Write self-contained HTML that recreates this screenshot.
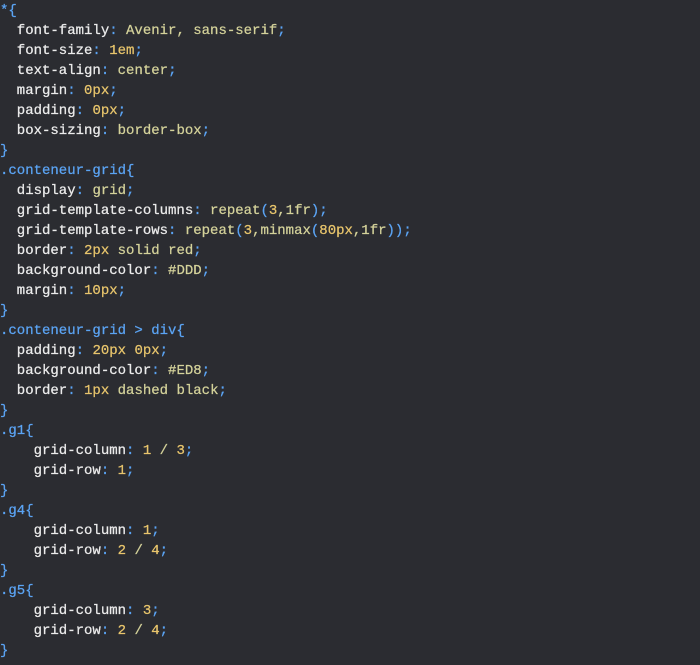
<!DOCTYPE html>
<html><head><meta charset="utf-8"><style>
html,body{margin:0;padding:0;background:#2b2c31;width:700px;height:665px;overflow:hidden}
pre{margin:0;padding:1px 0 0 0;font-family:"Liberation Mono",monospace;font-size:14px;line-height:20px;color:#ececec;white-space:pre;-webkit-text-stroke:0.25px}
.b{color:#5ba4f4}.k{color:#d4d29a}.n{color:#e8c56c}
</style></head><body><pre><span class="b">*{</span>
  font-family<span class="b">:</span> <span class="k">Avenir, sans-serif</span><span class="b">;</span>
  font-size<span class="b">:</span> <span class="n">1em</span><span class="b">;</span>
  text-align<span class="b">:</span> <span class="k">center</span><span class="b">;</span>
  margin<span class="b">:</span> <span class="n">0px</span><span class="b">;</span>
  padding<span class="b">:</span> <span class="n">0px</span><span class="b">;</span>
  box-sizing<span class="b">:</span> <span class="k">border-box</span><span class="b">;</span>
<span class="b">}</span>
<span class="b">.conteneur-grid{</span>
  display<span class="b">:</span> <span class="k">grid</span><span class="b">;</span>
  grid-template-columns<span class="b">:</span> <span class="k">repeat</span><span class="b">(</span><span class="n">3</span><span class="k">,1fr</span><span class="b">);</span>
  grid-template-rows<span class="b">:</span> <span class="k">repeat</span><span class="b">(</span><span class="n">3</span><span class="k">,minmax</span><span class="b">(</span><span class="n">80px</span><span class="k">,1fr</span><span class="b">));</span>
  border<span class="b">:</span> <span class="n">2px</span> <span class="k">solid red</span><span class="b">;</span>
  background-color<span class="b">:</span> <span class="k">#DDD</span><span class="b">;</span>
  margin<span class="b">:</span> <span class="n">10px</span><span class="b">;</span>
<span class="b">}</span>
<span class="b">.conteneur-grid &gt; div{</span>
  padding<span class="b">:</span> <span class="n">20px 0px</span><span class="b">;</span>
  background-color<span class="b">:</span> <span class="k">#ED8</span><span class="b">;</span>
  border<span class="b">:</span> <span class="n">1px</span> <span class="k">dashed black</span><span class="b">;</span>
<span class="b">}</span>
<span class="b">.g1{</span>
    grid-column<span class="b">:</span> <span class="n">1</span> <span class="k">/</span> <span class="n">3</span><span class="b">;</span>
    grid-row<span class="b">:</span> <span class="n">1</span><span class="b">;</span>
<span class="b">}</span>
<span class="b">.g4{</span>
    grid-column<span class="b">:</span> <span class="n">1</span><span class="b">;</span>
    grid-row<span class="b">:</span> <span class="n">2</span> <span class="k">/</span> <span class="n">4</span><span class="b">;</span>
<span class="b">}</span>
<span class="b">.g5{</span>
    grid-column<span class="b">:</span> <span class="n">3</span><span class="b">;</span>
    grid-row<span class="b">:</span> <span class="n">2</span> <span class="k">/</span> <span class="n">4</span><span class="b">;</span>
<span class="b">}</span></pre></body></html>
